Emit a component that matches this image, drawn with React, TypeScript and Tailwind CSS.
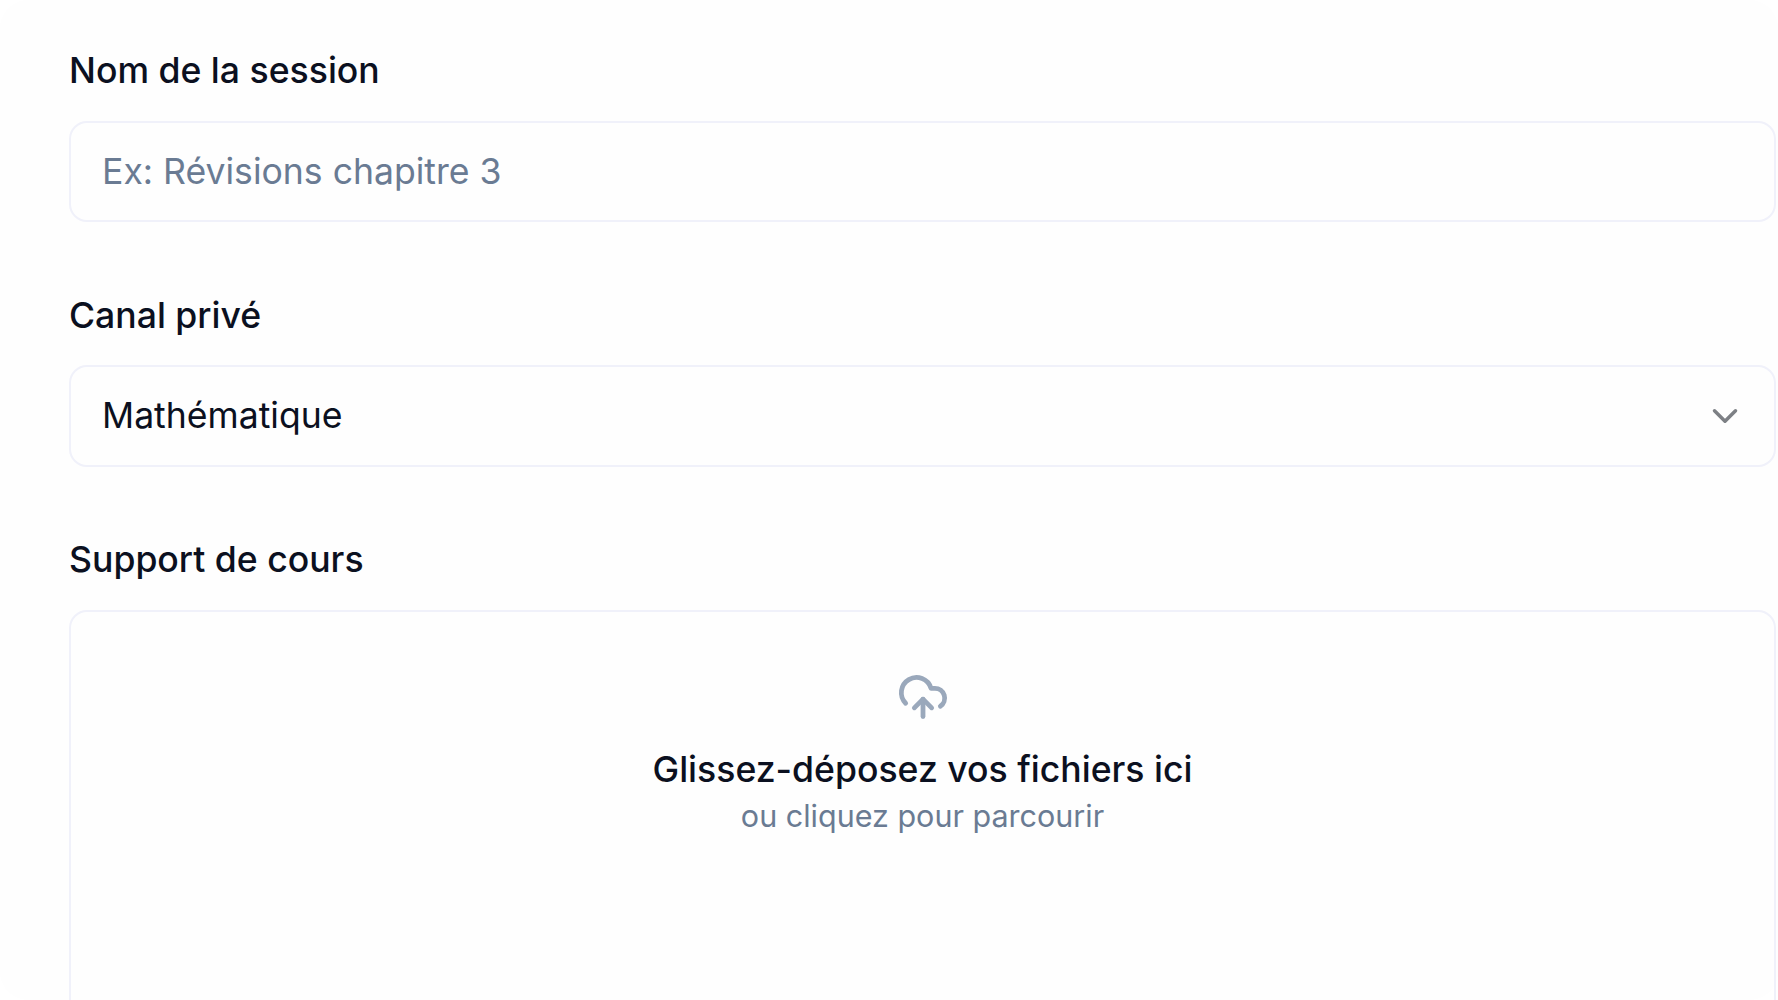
import { ChevronDown, CloudUpload } from 'lucide-react'

const labelClass = 'block text-[35.6px] leading-[54px] font-medium text-[#0b1020]'
const fieldClass =
  'flex items-center justify-between rounded-[18px] border-2 border-[#f0f1fa] bg-[#fefefe] pl-[31px] pr-[28px] text-[35.6px]'

export default function App() {
  return (
    <div className="h-screen overflow-hidden bg-white font-['Inter',sans-serif]">
      <div className="h-full rounded-[28px] bg-[#fefefe] pl-[69px] pr-[2px] pt-[44px]">
        {/* session name */}
        <label className={labelClass}>Nom de la session</label>
        <div className={`${fieldClass} mt-[23px] h-[101px] text-[#6a7b93]`}>Ex: Révisions chapitre 3</div>

        {/* channel */}
        <label className={`${labelClass} mt-[67px]`}>Canal privé</label>
        <div className={`${fieldClass} mt-[22px] h-[102px] text-[#0b1020]`}>
          <span>Mathématique</span>
          <ChevronDown size={42} strokeWidth={2} className="text-[#7d8085]" />
        </div>

        {/* upload */}
        <label className={`${labelClass} mt-[66px]`}>Support de cours</label>
        <div className="mt-[23px] flex h-[500px] flex-col items-center rounded-[18px] border-2 border-[#f0f1fa] pt-[59px]">
          <CloudUpload size={52} strokeWidth={2.2} className="text-[#9aa8bb]" />
          <p className="mt-[20px] text-[35.6px] leading-[54px] font-medium text-[#0b1020]">
            Glissez-déposez vos fichiers ici
          </p>
          <p className="-mt-[5px] text-[30.5px] leading-[47px] text-[#6a7b93]">ou cliquez pour parcourir</p>
        </div>
      </div>
    </div>
  )
}
